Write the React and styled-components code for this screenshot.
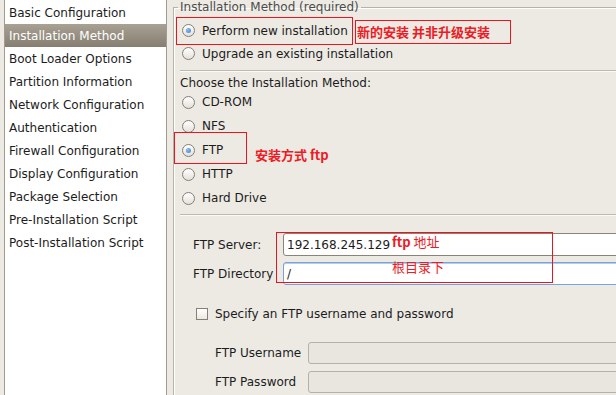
import React from 'react';
import styled, { createGlobalStyle } from 'styled-components';

const GlobalStyle = createGlobalStyle`
  html, body {
    margin: 0;
    padding: 0;
    background: #edeae4;
    overflow: hidden;
  }
  body {
    font-family: "DejaVu Sans", "Noto Sans CJK SC", sans-serif;
    font-size: 12px;
    color: #1c1c1c;
  }
`;

const steps = [
    'Basic Configuration',
    'Installation Method',
    'Boot Loader Options',
    'Partition Information',
    'Network Configuration',
    'Authentication',
    'Firewall Configuration',
    'Display Configuration',
    'Package Selection',
    'Pre-Installation Script',
    'Post-Installation Script',
];

const methods = ['CD-ROM', 'NFS', 'FTP', 'HTTP', 'Hard Drive'];

const App = () => {
    return (
        <Page>
            <GlobalStyle/>
            <Sidebar>
                {steps.map((s) => (
                    <NavItem key={s} $active={s === 'Installation Method'}>{s}</NavItem>
                ))}
            </Sidebar>
            <Main>
                <Frame>
                    <Legend>Installation Method (required)</Legend>
                    <OptionRow $h={23}>
                        <Radio $checked/>
                        <span>Perform new installation</span>
                    </OptionRow>
                    <OptionRow $h={23}>
                        <Radio/>
                        <span>Upgrade an existing installation</span>
                    </OptionRow>
                    <Divider $top={5}/>
                    <Caption>Choose the Installation Method:</Caption>
                    {methods.map((m) => (
                        <OptionRow key={m}>
                            <Radio $checked={m === 'FTP'}/>
                            <span>{m}</span>
                        </OptionRow>
                    ))}
                    <Divider $top={4}/>
                    <FieldRow $top={17} $indent={13} $label={90}>
                        <label>FTP Server:</label>
                        <Field>192.168.245.129</Field>
                    </FieldRow>
                    <FieldRow $top={6} $indent={13} $label={90}>
                        <label>FTP Directory</label>
                        <Field $focused>/</Field>
                    </FieldRow>
                    <CheckRow>
                        <CheckBox/>
                        <span>Specify an FTP username and password</span>
                    </CheckRow>
                    <FieldRow $top={20} $indent={35} $label={93} $h={22}>
                        <label>FTP Username</label>
                        <Field $disabled/>
                    </FieldRow>
                    <FieldRow $top={7} $indent={35} $label={93} $h={22}>
                        <label>FTP Password</label>
                        <Field $disabled/>
                    </FieldRow>
                </Frame>
            </Main>

            <MarkBox style={{left: 176, top: 17, width: 177, height: 28}}/>
            <MarkBox style={{left: 355, top: 20, width: 156, height: 24}}>
                <Note $bold>新的安装 并非升级安装</Note>
            </MarkBox>
            <MarkBox style={{left: 174, top: 132, width: 73, height: 32}}/>
            <FreeNote $bold style={{left: 255, top: 147}}>安装方式 ftp</FreeNote>
            <MarkBox style={{left: 276, top: 232, width: 277, height: 51}}/>
            <FreeNote style={{left: 392, top: 234}}><b>ftp</b> 地址</FreeNote>
            <FreeNote style={{left: 392, top: 259}}>根目录下</FreeNote>
        </Page>
    );
};

const Page = styled.div`
  position: relative;
  display: flex;
  width: 616px;
  height: 395px;
  overflow: hidden;
`;

const Sidebar = styled.div`
  flex-shrink: 0;
  width: 161px;
  margin-left: 4px;
  padding-top: 1px;
  background: #fff;
  border-left: 1px solid #a09c94;
  border-right: 1px solid #a09c94;
`;

const NavItem = styled.div`
  height: 23px;
  line-height: 24px;
  padding-left: 4px;
  white-space: nowrap;
  color: ${p => p.$active ? '#fff' : '#1c1c1c'};
  background: ${p => p.$active ? 'linear-gradient(#a8a294, #867e70)' : 'transparent'};
`;

const Main = styled.div`
  flex: 1;
  min-width: 0;
  margin-left: 6px;
`;

const Frame = styled.fieldset`
  width: 480px;
  height: 460px;
  margin: 0;
  padding: 5px 0 0 6px;
  border: 1px solid #b7b2a8;
  box-shadow: inset 1px 1px 0 #fff;
`;

const Legend = styled.legend`
  margin-left: -2px;
  padding: 0 2px;
  font-size: 12px;
  line-height: 14px;
  color: #4c4c4c;
`;

const OptionRow = styled.div`
  display: flex;
  align-items: center;
  gap: 7px;
  height: ${p => p.$h || 24}px;
  margin-left: 2px;
`;

const Radio = styled.span`
  position: relative;
  box-sizing: border-box;
  width: 13px;
  height: 13px;
  border-radius: 50%;
  border: 1px solid #857f75;
  background: linear-gradient(#ffffff, #e4e1da);

  &::after {
    content: '';
    display: ${p => p.$checked ? 'block' : 'none'};
    position: absolute;
    left: 3px;
    top: 3px;
    width: 5px;
    height: 5px;
    border-radius: 50%;
    background: radial-gradient(circle at 40% 35%, #8fbdf0, #3a7fd0);
  }
`;

const Divider = styled.div`
  margin-top: ${p => p.$top}px;
  border-top: 1px solid #bdb9b1;
  border-bottom: 1px solid #fbfaf8;
`;

const Caption = styled.div`
  height: 15px;
  line-height: 16px;
  margin-top: 3px;
`;

const FieldRow = styled.div`
  display: flex;
  align-items: stretch;
  height: ${p => p.$h || 23}px;
  margin-top: ${p => p.$top}px;
  padding-left: ${p => p.$indent}px;

  label {
    flex-shrink: 0;
    width: ${p => p.$label}px;
    display: flex;
    align-items: center;
    white-space: nowrap;
  }
`;

const Field = styled.div`
  box-sizing: border-box;
  width: 400px;
  padding-left: 3px;
  display: flex;
  align-items: center;
  border-radius: 3px;
  font-size: 12px;
  background: ${p => p.$disabled ? '#e9e6e0' : '#fff'};
  border: 1px solid ${p => p.$focused ? '#7aa2d4' : p.$disabled ? '#b6b1a7' : '#8a8478'};
  box-shadow: ${p => p.$focused ? 'inset 0 1px 0 #b3cdee' : 'none'};
`;

const CheckRow = styled.div`
  display: flex;
  align-items: center;
  gap: 7px;
  height: 16px;
  margin-top: 21px;
  padding-left: 16px;
`;

const CheckBox = styled.span`
  box-sizing: border-box;
  width: 12px;
  height: 12px;
  border: 1px solid #857f75;
  background: linear-gradient(#ffffff, #ebe8e2);
`;

const MarkBox = styled.div`
  position: absolute;
  box-sizing: border-box;
  border: 1px solid #e8141f;
  display: flex;
  align-items: center;
`;

const Note = styled.span`
  padding-left: 1px;
  font-family: "Noto Sans CJK SC", "DejaVu Sans", sans-serif;
  font-size: 13px;
  line-height: 16px;
  font-weight: ${p => p.$bold ? 700 : 400};
  color: #ee1a24;
  white-space: nowrap;
`;

const FreeNote = styled(Note)`
  position: absolute;
  padding-left: 0;
`;

export default App;
